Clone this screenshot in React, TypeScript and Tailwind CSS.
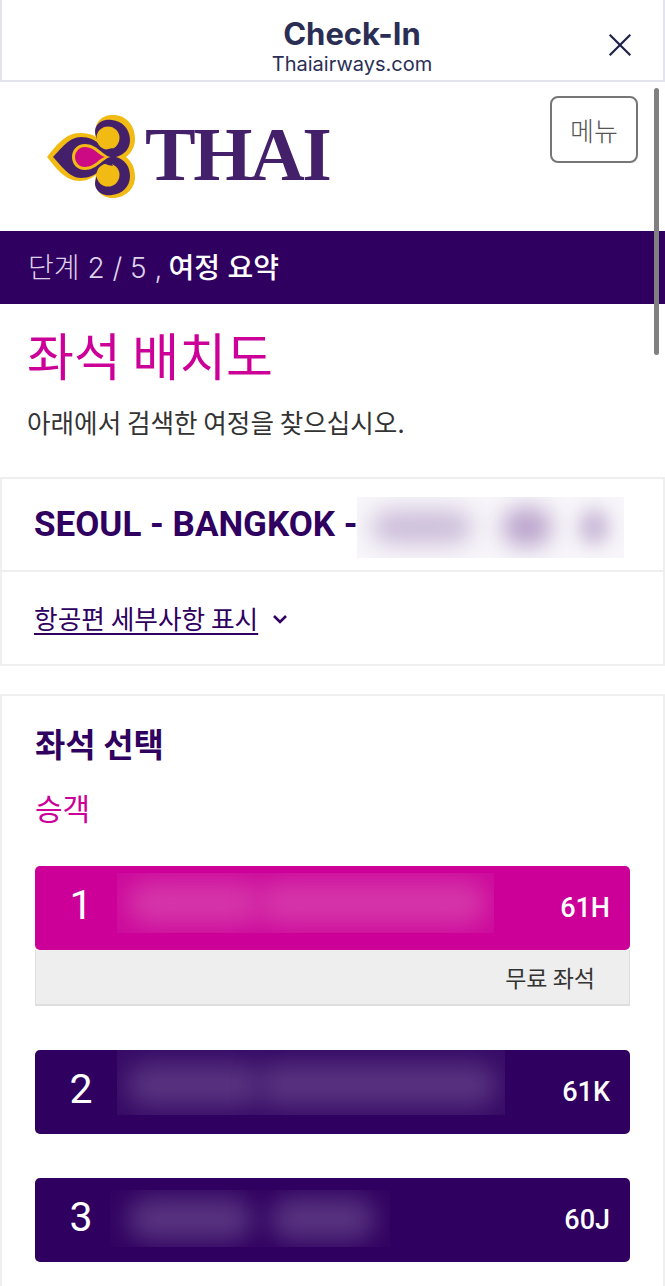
const KR = "font-['Noto_Sans_CJK_KR','Noto_Sans',sans-serif]"

function Emblem() {
  return (
    <svg viewBox="0 0 88 83" className="h-[83px] w-[88px] shrink-0">
      <path
        d="M0 42C9 31 18 18 33 18c6 0 12 1 16 4C46 8 54 0 66 0c13 0 22 10 22 24 0 8-4 14-9 18 5 4 9 10 9 20 0 12-10 21-22 21-12 0-20-9-17-23-4 3-10 6-16 6C18 66 9 53 0 42Z"
        fill="#f2bb13"
      />
      <path
        d="M6 42c8-8 16-20 28-20 8 0 15 3 20 9-6-8-7-15-5-19 3-6 9-8 16-7 10 1 18 9 18 20 0 9-6 15-14 17 8 2 14 9 14 19 0 11-8 18-18 19-7 1-13-1-16-7-2-4-1-11 5-19-5 6-12 9-20 9C22 63 14 50 6 42Z"
        fill="#44206b"
      />
      <circle cx="61" cy="23" r="11.5" fill="#f2bb13" />
      <circle cx="61" cy="60" r="11.5" fill="#f2bb13" />
      <path d="M66 33c-7 1-13 4-16 9 3 5 9 8 16 9-3-5-4-13 0-18Z" fill="#44206b" />
      <path d="M64 42C56 41 50 29 38 29c-8 0-13 6-13 13s5 13 13 13c12 0 18-12 26-13Z" fill="#f2bb13" />
      <path d="M58 42C52 41 48 32 38 32c-6 0-10 5-10 10s4 10 10 10c10 0 14-9 20-10Z" fill="#cc0a83" />
    </svg>
  )
}

function Blur({ w, tone, blobs }: { w: string; tone: string; blobs: string[] }) {
  return (
    <div className={`relative shrink-0 overflow-hidden ${w} ${tone}`}>
      {blobs.map((b, i) => (
        <div key={i} className={`absolute ${b}`} />
      ))}
    </div>
  )
}

function SeatRow({
  num,
  seat,
  tone,
  patch,
}: {
  num: string
  seat: string
  tone: string
  patch: React.ReactNode
}) {
  return (
    <div className={`flex h-[84px] items-center rounded-[5px] pr-5 text-white ${tone}`}>
      <div className="flex w-[82px] shrink-0 justify-center pb-[5px] pl-[10px] font-['Roboto',sans-serif] text-[41px] font-normal leading-none">{num}</div>
      {patch}
      <div className="ml-auto font-['Roboto',sans-serif] text-[27px] font-medium leading-none">{seat}</div>
    </div>
  )
}

export default function App() {
  return (
    <div className={`relative h-[1286px] w-[665px] overflow-hidden bg-white ${KR}`}>
      <header className="flex h-[82px] items-start border-x-2 border-b-2 border-[#e2e3ec] pr-[30px]">
        <div className="flex flex-1 flex-col items-center pl-[95px] pt-[16px] font-['Inter',sans-serif] text-[#2a2e55]">
          <div className="text-[31px] font-bold leading-[36px]">Check-In</div>
          <div className="text-[20px] leading-[24px]">Thaiairways.com</div>
        </div>
        <svg viewBox="0 0 24 24" className="mt-[32px] h-[26px] w-[26px] shrink-0" fill="none" stroke="#1d2145" strokeWidth="2">
          <path d="M2.5 2.5l19 19M21.5 2.5l-19 19" />
        </svg>
      </header>

      <div className="flex h-[149px] items-start justify-between pl-[47px] pr-[27px]">
        <div className="flex items-start pt-[33px]">
          <Emblem />
          <div className="ml-[10px] mt-[-4px] font-['Liberation_Serif',serif] text-[76px] font-bold leading-[1.15] tracking-[-2.5px] text-[#44206b]">THAI</div>
        </div>
        <button className="mt-[14px] h-[67px] w-[88px] rounded-[8px] border-2 border-[#767676] text-[26px] font-light text-[#555555]">메뉴</button>
      </div>

      <div className="flex h-[73px] items-center bg-[#300060] px-[28px] font-['Inter','Noto_Sans_CJK_KR',sans-serif] text-[28px]">
        <span className="font-light text-[#ddd3e8]">단계 2 / 5 ,</span>
        <span className="ml-[6px] font-medium text-white">여정 요약</span>
      </div>

      <div className="px-[27px] pt-[17px]">
        <h1 className="text-[51px] font-normal leading-[66px] text-[#cc0099]">좌석 배치도</h1>
        <p className="mt-[17px] text-[25.6px] leading-[36px] text-[#333333]">아래에서 검색한 여정을 찾으십시오.</p>
      </div>

      <section className="mt-[37px] border-2 border-[#efefef]">
        <div className="flex h-[93px] items-center border-b-2 border-[#efefef] pl-[32px]">
          <span className="w-[323px] shrink-0 whitespace-nowrap font-['Roboto',sans-serif] text-[35px] font-bold leading-none text-[#300060]">SEOUL - BANGKOK -</span>
          <Blur
            w="mt-[6px] h-[61px] w-[267px]"
            tone="bg-[#f8f6fa]"
            blobs={[
              'left-[15px] top-[14px] h-[32px] w-[100px] rounded-full bg-[#c9b9d7] blur-[12px]',
              'left-[145px] top-[10px] h-[40px] w-[50px] rounded-full bg-[#bca6cd] blur-[11px]',
              'left-[222px] top-[12px] h-[36px] w-[30px] rounded-full bg-[#c9b9d7] blur-[9px]',
            ]}
          />
        </div>
        <div className="flex h-[92px] items-center pl-[32px] text-[#300060]">
          <a className="text-[25.7px] leading-none underline underline-offset-4">항공편 세부사항 표시</a>
          <svg viewBox="0 0 16 16" className="ml-[14px] mt-[2px] h-[16px] w-[16px]" fill="none" stroke="#300060" strokeWidth="2.6">
            <path d="M2 5l6 6 6-6" />
          </svg>
        </div>
      </section>

      <section className="mt-[28px] border-x-2 border-t-2 border-[#efefef] px-[33px] pb-[30px] pt-[24px]">
        <h2 className="text-[33px] font-bold leading-[46px] text-[#300060]">좌석 선택</h2>
        <h3 className="mt-[21px] text-[30px] font-normal leading-[40px] text-[#cc0099]">승객</h3>

        <div className="mt-[39px]">
          <SeatRow
            num="1"
            seat="61H"
            tone="bg-[#cc0099]"
            patch={
              <Blur
                w="mb-[10px] h-[60px] w-[377px]"
                tone="bg-[#cd0a9c]"
                blobs={[
                  'left-[10px] top-[8px] h-[44px] w-[135px] rounded-full bg-[#d535a9] blur-[12px]',
                  'left-[140px] top-[8px] h-[44px] w-[230px] rounded-full bg-[#d535a9] blur-[12px]',
                ]}
              />
            }
          />
          <div className="flex h-[56px] items-center justify-end border-x border-b-2 border-[#dedede] bg-[#eeeeee] pr-[34px] text-[23px] text-[#333333]">무료 좌석</div>
        </div>

        <div className="mt-[44px]">
          <SeatRow
            num="2"
            seat="61K"
            tone="bg-[#300060]"
            patch={
              <Blur
                w="h-[65px] w-[388px] self-start"
                tone="bg-[#370b66]"
                blobs={[
                  'left-[10px] top-[14px] h-[42px] w-[135px] rounded-full bg-[#583480] blur-[12px]',
                  'left-[140px] top-[14px] h-[42px] w-[240px] rounded-full bg-[#583480] blur-[12px]',
                ]}
              />
            }
          />
        </div>

        <div className="mt-[44px]">
          <SeatRow
            num="3"
            seat="60J"
            tone="bg-[#300060]"
            patch={
              <Blur
                w="-ml-[7px] mb-[4px] h-[57px] w-[280px]"
                tone="bg-[#320361]"
                blobs={[
                  'left-[18px] top-[8px] h-[42px] w-[125px] rounded-full bg-[#583480] blur-[12px]',
                  'left-[160px] top-[8px] h-[42px] w-[105px] rounded-full bg-[#583480] blur-[12px]',
                ]}
              />
            }
          />
        </div>
      </section>

      <div className="absolute left-[654px] top-[88px] h-[267px] w-[5px] rounded-full bg-[#808080]" />
    </div>
  )
}
